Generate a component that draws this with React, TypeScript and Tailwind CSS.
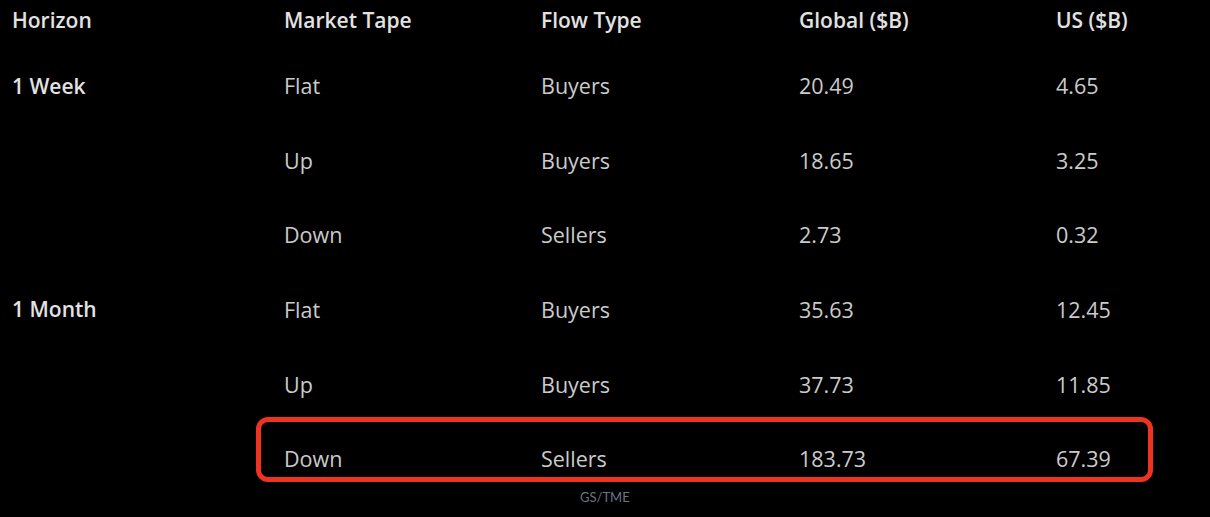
import React from "react";

const rows = [
  { h: "1 Week", t: "Flat", f: "Buyers", g: "20.49", u: "4.65" },
  { h: "", t: "Up", f: "Buyers", g: "18.65", u: "3.25" },
  { h: "", t: "Down", f: "Sellers", g: "2.73", u: "0.32" },
  { h: "1 Month", t: "Flat", f: "Buyers", g: "35.63", u: "12.45" },
  { h: "", t: "Up", f: "Buyers", g: "37.73", u: "11.85" },
  { h: "", t: "Down", f: "Sellers", g: "183.73", u: "67.39", hl: true },
];

const cols = "grid grid-cols-[272px_257px_258px_257px_1fr] items-center";

export default function App() {
  return (
    <div
      className="w-[1210px] h-[517px] bg-black overflow-hidden pl-[12px] relative"
      style={{ fontFamily: '"Open Sans", "Noto Sans", sans-serif' }}
    >
      <div className={`${cols} h-[41px] text-[21px] font-semibold text-[#e2e2e2]`}>
        <div>Horizon</div>
        <div>Market Tape</div>
        <div>Flow Type</div>
        <div>Global ($B)</div>
        <div>US ($B)</div>
      </div>
      <div className="mt-[8px]">
        {rows.map((r, i) => (
          <div key={i} className={`${cols} h-[74.6px] text-[21.5px] text-[#cbcbcb] relative`}>
            <div className="font-semibold text-[21px] text-[#e2e2e2]">{r.h}</div>
            <div>{r.t}</div>
            <div>{r.f}</div>
            <div>{r.g}</div>
            <div>{r.u}</div>
            {r.hl && (
              <div className="absolute left-[244px] w-[897px] -top-[5px] h-[65px] border-[5px] border-[#ee3322] rounded-[12px]" />
            )}
          </div>
        ))}
      </div>
      <div
        className="absolute left-[580px] top-[488px] text-[13px] text-[#6e7384]"
        style={{ fontFamily: 'Lato, "Open Sans", sans-serif' }}
      >
        GS/TME
      </div>
    </div>
  );
}
